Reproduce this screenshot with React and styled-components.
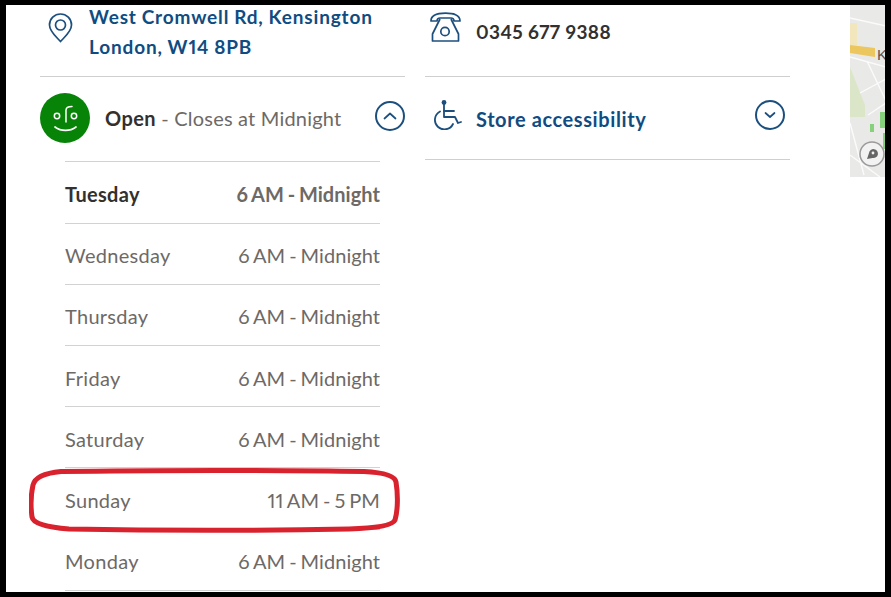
import React from "react";
import styled, { createGlobalStyle } from "styled-components";

const Global = createGlobalStyle`
  html, body { margin: 0; padding: 0; background: #fff; }
  body { font-family: "Lato", "Liberation Sans", sans-serif; font-feature-settings: "pnum" 1; }
`;

const Frame = styled.div`
  position: relative;
  box-sizing: border-box;
  width: 891px;
  height: 597px;
  background: #fff;
  border-style: solid;
  border-color: #000;
  border-width: 5px 6px 5px 6px;
  overflow: hidden;
  display: flex;
  align-items: flex-start;
  padding-left: 34px;
`;

const Col = styled.section`
  width: 365px;
  flex: none;
  margin-right: ${(p) => p.$gap}px;
`;

const TopCell = styled.div`
  height: 72px;
  box-sizing: border-box;
  border-bottom: 1px solid #cfcfcf;
  display: flex;
  align-items: flex-start;
`;

const PinSlot = styled.div`
  width: 49px;
  flex: none;
  padding: 8px 0 0 8px;
  box-sizing: border-box;
  color: #1c4f7e;
  line-height: 0;
`;

const Address = styled.a`
  color: #0f4c81;
  font-size: 19px;
  font-weight: 700;
  line-height: 30px;
  letter-spacing: 0.84px;
  word-spacing: -0.5px;
  margin-top: -3px;
`;

const PhoneSlot = styled.div`
  width: 51px;
  flex: none;
  padding: 7px 0 0 5px;
  box-sizing: border-box;
  line-height: 0;
`;

const Phone = styled.span`
  font-size: 19px;
  font-weight: 700;
  line-height: 30px;
  margin-top: 12px;
  color: #33302e;
  letter-spacing: 0.4px;
`;

const HeadRow = styled.div`
  height: ${(p) => (p.$lined ? 83 : 84.45)}px;
  box-sizing: border-box;
  display: flex;
  align-items: center;
  border-bottom: ${(p) => (p.$lined ? "1px solid #cfcfcf" : "none")};
`;

const Badge = styled.div`
  width: 50px;
  height: 50px;
  border-radius: 50%;
  background: #078407;
  flex: none;
  margin-right: 15px;
  margin-bottom: 2px;
  line-height: 0;
`;

const Status = styled.div`
  flex: 1;
  font-size: 20px;
  color: #6d6966;
  letter-spacing: 0.2px;
  white-space: nowrap;
  padding-bottom: 2px;
  b { color: #33302e; font-weight: 700; letter-spacing: 0.42px; }
`;

const AccessSlot = styled.div`
  width: 51px;
  flex: none;
  padding-left: 9px;
  margin-bottom: 8px;
  box-sizing: border-box;
  line-height: 0;
`;

const AccessLabel = styled.a`
  flex: 1;
  color: #0f4c81;
  font-size: 20px;
  font-weight: 700;
  letter-spacing: 0.6px;
  padding-top: 2px;
`;

const RoundButton = styled.button`
  width: 30px;
  height: 30px;
  padding: 0;
  border: 2px solid #1c4f7e;
  border-radius: 50%;
  background: #fff;
  color: #1c4f7e;
  flex: none;
  display: flex;
  align-items: center;
  justify-content: center;
  margin-bottom: 7px;
  margin-right: ${(p) => p.$inset || 0}px;
`;

const Hours = styled.div`
  margin-left: 25px;
  width: 315px;
  border-bottom: 1px solid #d2d2d2;
`;

const Row = styled.div`
  height: 61.2px;
  box-sizing: border-box;
  padding-top: 3px;
  border-top: 1px solid #d2d2d2;
  display: flex;
  align-items: center;
  justify-content: space-between;
  font-size: 20px;
  letter-spacing: 0.3px;
  color: ${(p) => (p.$today ? "#33302e" : "#6d6966")};
  font-weight: ${(p) => (p.$today ? 700 : 400)};
`;

const Time = styled.span`
  color: #6d6966;
  word-spacing: -1.2px;
  letter-spacing: 0.05px;
`;

const MapTile = styled.svg`
  flex: none;
  width: 36px;
  height: 172px;
  display: block;
`;

const Mark = styled.svg`
  position: absolute;
  left: 23px;
  top: 459px;
  width: 374px;
  height: 72px;
  pointer-events: none;
`;

const Pin = () => (
  <svg width="25" height="30" viewBox="0 0 25 30" fill="none" stroke="currentColor" strokeWidth="1.7">
    <path d="M12.5 28.5 C8 23.5 1.5 18.5 1.5 12 A11 11 0 0 1 23.5 12 C23.5 18.5 17 23.5 12.5 28.5Z" />
    <circle cx="12.5" cy="12" r="5" />
  </svg>
);

const Telephone = () => (
  <svg width="32" height="32" viewBox="0 0 32 32" fill="none" stroke="#1c4f7e" strokeWidth="1.7" strokeLinejoin="round">
    <path d="M1 9 C1 2.5 8 1.2 15.5 1.2 C23 1.2 30 2.5 30 9 L24 9 C24 6.5 22.5 6 21 6 L10 6 C8.5 6 7 6.5 7 9Z" />
    <path d="M10 7 L2.5 22 L2.5 29 L28.5 29 L28.5 22 L21 7" />
    <circle cx="15" cy="19.5" r="4.2" />
  </svg>
);

const Wheelchair = () => (
  <svg width="30" height="32" viewBox="0 0 30 32" fill="none" stroke="#1c4f7e" strokeWidth="1.8" strokeLinecap="round" strokeLinejoin="round">
    <circle cx="10" cy="4.5" r="2.4" fill="#1c4f7e" stroke="none" />
    <path d="M10 5 L10 19 L21 19 L24 25 L27 24" />
    <path d="M10 13 L20 13" />
    <path d="M6 13.5 A9.5 9.5 0 1 0 19 26" />
  </svg>
);

const Face = () => (
  <svg width="50" height="50" viewBox="0 0 50 50" fill="none" stroke="#fff" strokeWidth="1.5" strokeLinecap="round">
    <circle cx="17" cy="23" r="2.7" />
    <circle cx="34" cy="23" r="2.7" />
    <path d="M26 29 L26 17 C26 14.5 28 13.5 32 13.5" />
    <path d="M15 34 C21 38.5 30 38.5 36 34" strokeWidth="1.7" />
  </svg>
);

const Chevron = ({ up }) => (
  <svg width="16" height="10" viewBox="0 0 16 10" fill="none" stroke="currentColor" strokeWidth="1.7" strokeLinecap="round" strokeLinejoin="round">
    <path d={up ? "M2.5 7.5 L8 2.5 L13.5 7.5" : "M3.5 3 L8 7 L12.5 3"} />
  </svg>
);

const MapImage = () => (
  <MapTile viewBox="0 0 36 172">
    <rect width="36" height="172" fill="#e9e9e8" />
    <rect x="0" y="18" width="7" height="22" fill="#f2e6bc" />
    <path d="M0 62 L15 100 L15 112 L0 112Z" fill="#dbe6c9" />
    <path d="M0 40 L25 43 L25 52 L0 48Z" fill="#ecc65f" />
    <path d="M0 13 L36 21 M0 52 L36 62 M17 56 L36 96 M0 118 L14 170 M10 88 L36 74 M18 110 L36 98 M0 150 L30 172" stroke="#fbfbfb" strokeWidth="1.4" fill="none" />
    <rect x="30" y="107" width="6" height="16" fill="#86d27c" />
    <rect x="20" y="119" width="4" height="8" fill="#86d27c" />
    <rect x="33" y="128" width="3" height="16" fill="#86d27c" />
    <text x="27" y="55" fontFamily="Liberation Sans, sans-serif" fontSize="15" fill="#555">K</text>
    <circle cx="22" cy="149" r="12" fill="#f2f2f2" stroke="#9a9a9a" strokeWidth="1.5" />
    <path d="M17 154 L19 148 A4.5 4.5 0 1 1 22.5 153 Z" fill="#666" />
    <circle cx="23" cy="148" r="1.4" fill="#f2f2f2" />
  </MapTile>
);

const days = [
  ["Tuesday", "6 AM - Midnight", true],
  ["Wednesday", "6 AM - Midnight"],
  ["Thursday", "6 AM - Midnight"],
  ["Friday", "6 AM - Midnight"],
  ["Saturday", "6 AM - Midnight"],
  ["Sunday", "11 AM - 5 PM"],
  ["Monday", "6 AM - Midnight"],
];

export default function App() {
  return (
    <Frame>
      <Global />
      <Col $gap={20}>
        <TopCell>
          <PinSlot><Pin /></PinSlot>
          <Address>West Cromwell Rd, Kensington<br />London, W14 8PB</Address>
        </TopCell>
        <HeadRow>
          <Badge><Face /></Badge>
          <Status><b>Open</b> - Closes at Midnight</Status>
          <RoundButton aria-label="Collapse hours"><Chevron up /></RoundButton>
        </HeadRow>
        <Hours>
          {days.map(([d, t, today]) => (
            <Row key={d} $today={today}>
              <span>{d}</span>
              <Time>{t}</Time>
            </Row>
          ))}
        </Hours>
      </Col>
      <Col $gap={60}>
        <TopCell>
          <PhoneSlot><Telephone /></PhoneSlot>
          <Phone>0345 677 9388</Phone>
        </TopCell>
        <HeadRow $lined>
          <AccessSlot><Wheelchair /></AccessSlot>
          <AccessLabel>Store accessibility</AccessLabel>
          <RoundButton $inset={5} aria-label="Expand accessibility"><Chevron /></RoundButton>
        </HeadRow>
      </Col>
      <MapImage />
      <Mark viewBox="0 0 374 72">
        <path d="M32 7.5 C120 6 260 6 335 7.5 C355 8.5 366 12 367 18 C369 30 369 46 366 56 C364 61 350 64 320 65 C240 66.5 120 66.5 40 65 C15 63 4 59 3 53 C1.5 42 2 30 4 21 C6 13 16 9 32 7.5Z" fill="none" stroke="#d8232f" strokeWidth="5" />
      </Mark>
    </Frame>
  );
}
